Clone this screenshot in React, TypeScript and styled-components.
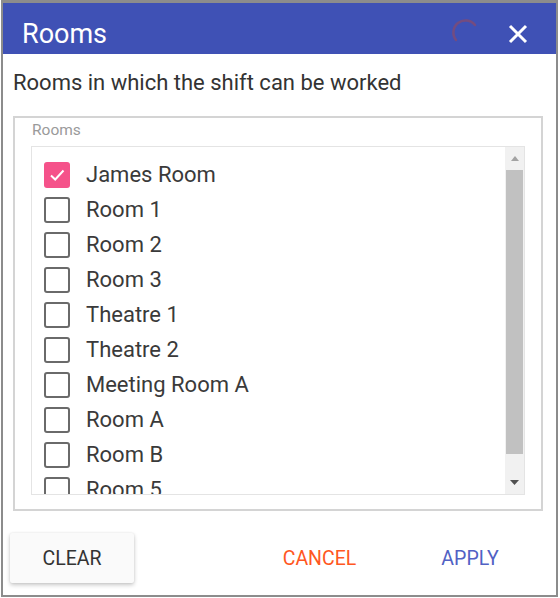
import React from "react";
import styled, { createGlobalStyle } from "styled-components";

const Global = createGlobalStyle`
  html, body { margin: 0; padding: 0; background: #ffffff; }
  body { font-family: Roboto, "Noto Sans", Arial, sans-serif; }
  * { box-sizing: border-box; }
`;

const Dialog = styled.div`
  margin-left: 1px;
  width: 557px;
  height: 597px;
  border: 2px solid #8c8c8c;
  border-top-width: 3px;
  background: #ffffff;
  display: flex;
  flex-direction: column;
`;

const Header = styled.div`
  height: 51px;
  background: #3f51b5;
  display: flex;
  align-items: center;
  padding: 10px 26px 0 19px;
  flex-shrink: 0;
`;

const Title = styled.div`
  color: #ffffff;
  font-size: 27px;
  flex: 1;
`;

const Spinner = styled.svg`
  width: 32px;
  height: 32px;
  margin-right: 23px;
`;

const CloseBtn = styled.div`
  width: 24px;
  height: 24px;
  display: flex;
  align-items: center;
  justify-content: center;
`;

const Body = styled.div`
  padding: 17px 12px 0 10px;
  display: flex;
  flex-direction: column;
`;

const Subtitle = styled.div`
  font-size: 22px;
  color: #333333;
  height: 24px;
  line-height: 24px;
  margin-bottom: 21px;
  white-space: nowrap;
`;

const Fieldset = styled.div`
  width: 530px;
  height: 395px;
  border: 2px solid #d4d4d4;
  padding: 2px 16px 14px 16px;
  display: flex;
  flex-direction: column;
`;

const Legend = styled.div`
  font-size: 15.5px;
  color: #9a9a9a;
  height: 20px;
  line-height: 20px;
  margin-left: 1px;
  margin-bottom: 6px;
`;

const ListBox = styled.div`
  flex: 1;
  border: 1px solid #e4e4e4;
  display: flex;
  overflow: hidden;
`;

const Items = styled.div`
  flex: 1;
  padding: 10px 0 0 12px;
  overflow: hidden;
`;

const Row = styled.div`
  height: 35px;
  display: flex;
  align-items: center;
  gap: 16px;
`;

const Box = styled.div<{ $checked?: boolean }>`
  width: 26px;
  height: 26px;
  border-radius: 3px;
  border: ${(p) => (p.$checked ? "none" : "2px solid #6a6a6a")};
  background: ${(p) => (p.$checked ? "#f5528a" : "transparent")};
  display: flex;
  align-items: center;
  justify-content: center;
  flex-shrink: 0;
`;

const Label = styled.span`
  font-size: 22px;
  color: #3a3a3a;
  white-space: nowrap;
`;

const ScrollBar = styled.div`
  width: 19px;
  background: #f1f1f1;
  display: flex;
  flex-direction: column;
  align-items: center;
`;

const Arrow = styled.div`
  height: 23px;
  width: 100%;
  display: flex;
  align-items: center;
  justify-content: center;
`;

const Thumb = styled.div`
  width: 17px;
  height: 284px;
  background: #c1c1c1;
`;

const Track = styled.div`
  flex: 1;
`;

const Footer = styled.div`
  display: flex;
  align-items: center;
  padding: 22px 0 0 7px;
`;

const RaisedButton = styled.button`
  width: 124px;
  height: 50px;
  border: none;
  border-radius: 2px;
  background: #fafafa;
  box-shadow: 0 2px 4px rgba(0, 0, 0, 0.22), 0 0 2px rgba(0, 0, 0, 0.08);
  font-family: Roboto, Arial, sans-serif;
  font-size: 19.5px;
  color: #333333;
  padding: 0;
`;

const FlatButton = styled.button<{ $color: string; $width: number; $offset: number }>`
  width: ${(p) => p.$width}px;
  margin-left: ${(p) => p.$offset}px;
  height: 50px;
  border: none;
  background: transparent;
  font-family: Roboto, Arial, sans-serif;
  font-size: 19.5px;
  color: ${(p) => p.$color};
  padding: 0;
`;

const rooms = [
  "James Room",
  "Room 1",
  "Room 2",
  "Room 3",
  "Theatre 1",
  "Theatre 2",
  "Meeting Room A",
  "Room A",
  "Room B",
  "Room 5",
];

export default function App() {
  return (
    <>
      <Global />
      <Dialog>
        <Header>
          <Title>Rooms</Title>
          <Spinner viewBox="0 0 32 32">
            <path
              d="M5 22 A12 12 0 0 1 24 7"
              fill="none"
              stroke="#8a4a6a"
              strokeOpacity="0.7"
              strokeWidth="2.5"
              strokeLinecap="round"
            />
          </Spinner>
          <CloseBtn>
            <svg width="22" height="22" viewBox="0 0 22 22">
              <path d="M3 3 L19 19 M19 3 L3 19" stroke="#ffffff" strokeWidth="3" />
            </svg>
          </CloseBtn>
        </Header>
        <Body>
          <Subtitle>Rooms in which the shift can be worked</Subtitle>
          <Fieldset>
            <Legend>Rooms</Legend>
            <ListBox>
              <Items>
                {rooms.map((r, i) => (
                  <Row key={r}>
                    <Box $checked={i === 0}>
                      {i === 0 && (
                        <svg width="20" height="20" viewBox="0 0 20 20">
                          <path
                            d="M4 10.5 L8.2 14.5 L16.5 5.5"
                            fill="none"
                            stroke="#ffffff"
                            strokeWidth="2"
                          />
                        </svg>
                      )}
                    </Box>
                    <Label>{r}</Label>
                  </Row>
                ))}
              </Items>
              <ScrollBar>
                <Arrow>
                  <svg width="8" height="5" viewBox="0 0 8 5">
                    <path d="M0 5 L4 0 L8 5 Z" fill="#a3a3a3" />
                  </svg>
                </Arrow>
                <Thumb />
                <Track />
                <Arrow>
                  <svg width="9" height="5" viewBox="0 0 9 5">
                    <path d="M0 0 L4.5 5 L9 0 Z" fill="#505050" />
                  </svg>
                </Arrow>
              </ScrollBar>
            </ListBox>
          </Fieldset>
        </Body>
        <Footer>
          <RaisedButton>CLEAR</RaisedButton>
          <FlatButton $color="#ff5722" $width={119} $offset={126}>CANCEL</FlatButton>
          <FlatButton $color="#5161c4" $width={100} $offset={41}>APPLY</FlatButton>
        </Footer>
      </Dialog>
    </>
  );
}
